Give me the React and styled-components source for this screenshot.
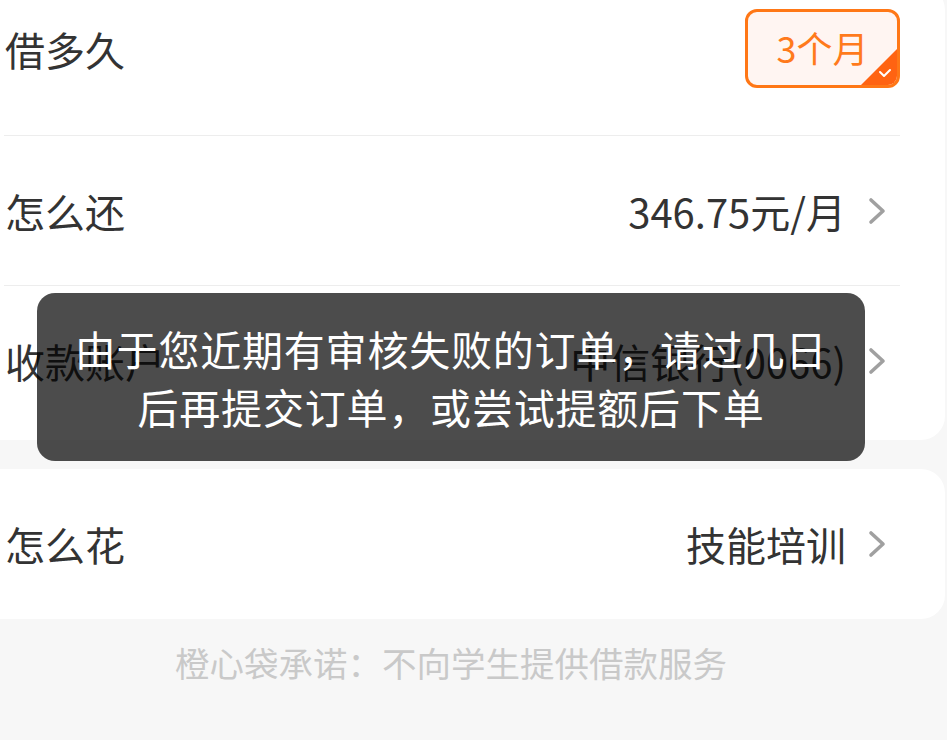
import React from 'react';
import styled, { createGlobalStyle } from 'styled-components';

const GlobalStyle = createGlobalStyle`
  html, body {
    margin: 0;
    padding: 0;
    background: #f7f7f7;
  }
  body {
    font-family: "Noto Sans CJK SC", "Noto Sans", sans-serif;
    color: #333;
  }
`;

const Viewport = styled.div`
  width: 947px;
  height: 740px;
  overflow: hidden;
  background: #f7f7f7;
`;

const Sheet = styled.div`
  position: relative;
  width: 988px;
  margin-left: -43px;
  margin-top: -14px;
`;

const Card = styled.div`
  background: #fff;
  border-radius: 24px;
  padding: 0 45px ${(p) => (p.$gap ? '4px' : '0')} 47px;
  margin-bottom: ${(p) => (p.$gap ? '29px' : '0')};
`;

const Row = styled.div`
  display: flex;
  align-items: center;
  justify-content: space-between;
  height: 150px;
  box-sizing: border-box;
  padding-bottom: ${(p) => (p.$top ? '24px' : '0')};
  border-bottom: ${(p) => (p.$last ? 'none' : '1px solid #ededed')};
`;

const Label = styled.span`
  font-size: 40px;
  color: #333;
  padding-left: 1px;
`;

const Value = styled.div`
  display: flex;
  align-items: center;
  font-size: 40px;
  color: #333;
`;

const Chevron = styled.svg`
  width: 18px;
  height: 28px;
  margin-left: 22px;
  margin-right: 14px;
`;

const Badge = styled.div`
  position: relative;
  overflow: hidden;
  width: 155px;
  height: 79px;
  box-sizing: border-box;
  border: 3px solid #ff7716;
  border-radius: 12px;
  background: #fff5f2;
  color: #ff7a1c;
  font-size: 36px;
  display: flex;
  align-items: center;
  justify-content: center;
  padding-bottom: 3px;
`;

const Corner = styled.div`
  position: absolute;
  right: 0;
  bottom: 0;
  width: 36px;
  height: 36px;
  background: #ff6312;
  clip-path: polygon(100% 0, 100% 100%, 0 100%);
`;

const Check = styled.svg`
  position: absolute;
  right: 5px;
  bottom: 7px;
  width: 14px;
  height: 10px;
`;

const Footer = styled.div`
  text-align: center;
  font-size: 34.5px;
  line-height: 48px;
  color: #c9c9c9;
  padding-top: 19px;
`;

const Toast = styled.div`
  position: absolute;
  top: 307px;
  left: 50%;
  transform: translateX(-50%);
  width: 828px;
  box-sizing: border-box;
  padding: 26px 36px;
  background: rgba(0, 0, 0, 0.7);
  border-radius: 18px;
  color: #fff;
  font-size: 41px;
  letter-spacing: 0.8px;
  line-height: 58px;
  text-align: center;
`;

const Arrow = () => (
  <Chevron viewBox="0 0 18 28">
    <polyline points="3,3 15,14 3,25" fill="none" stroke="#a0a0a0" strokeWidth="3.6" strokeLinecap="round" strokeLinejoin="round" />
  </Chevron>
);

const rows = [
  { label: '怎么还', value: '346.75元/月' },
  { label: '收款账户', value: '中信银行(0066)', last: true },
];

export default function App() {
  return (
    <Viewport>
      <GlobalStyle />
      <Sheet>
        <Card $gap>
          <Row $top>
            <Label>借多久</Label>
            <Badge>
              3个月
              <Corner />
              <Check viewBox="0 0 14 10">
                <polyline points="2,4 6,8 12,2" fill="none" stroke="#fff" strokeWidth="2" strokeLinecap="round" strokeLinejoin="round" />
              </Check>
            </Badge>
          </Row>
          {rows.map((r) => (
            <Row key={r.label} $last={r.last}>
              <Label>{r.label}</Label>
              <Value>
                {r.value}
                <Arrow />
              </Value>
            </Row>
          ))}
        </Card>
        <Card>
          <Row $last>
            <Label>怎么花</Label>
            <Value>
              技能培训
              <Arrow />
            </Value>
          </Row>
        </Card>
        <Footer>橙心袋承诺：不向学生提供借款服务</Footer>
        <Toast>
          由于您近期有审核失败的订单，请过几日
          <br />
          后再提交订单，或尝试提额后下单
        </Toast>
      </Sheet>
    </Viewport>
  );
}
